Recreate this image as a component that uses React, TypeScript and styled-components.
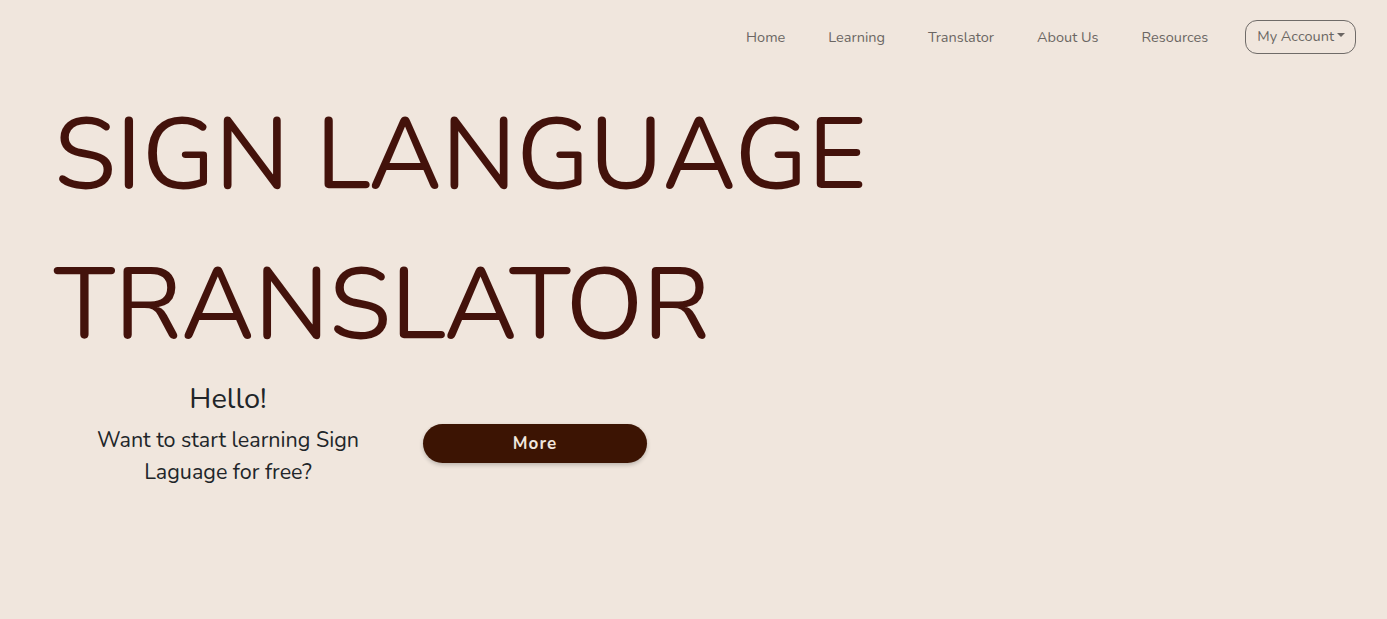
import React from "react";
import styled, { createGlobalStyle } from "styled-components";

const Global = createGlobalStyle`
  html, body {
    margin: 0;
    padding: 0;
    background: #f0e6dd;
  }
  body {
    font-family: "Nunito", "Lato", "Noto Sans", sans-serif;
    color: #212529;
  }
  * { box-sizing: border-box; }
`;

const Page = styled.div`
  min-height: 619px;
  background: #f0e6dd;
  display: flex;
  flex-direction: column;
`;

const NavBar = styled.nav`
  height: 74px;
  display: flex;
  align-items: center;
  justify-content: flex-end;
  padding: 0 31px 0 0;
`;

const NavList = styled.ul`
  display: flex;
  align-items: center;
  gap: 43px;
  list-style: none;
  margin: 0;
  padding: 0;
`;

const NavLink = styled.a`
  font-size: 14.5px;
  color: #6b6663;
  text-decoration: none;
  line-height: 22px;
  cursor: pointer;
`;

const AccountButton = styled.button`
  margin-left: -6px;
  margin-bottom: 1px;
  height: 34px;
  padding: 0 10px 2px 11px;
  border: 1px solid #6f6b68;
  border-radius: 12px;
  background: transparent;
  font-family: inherit;
  font-size: 14.5px;
  color: #6b6663;
  display: flex;
  align-items: center;
  cursor: pointer;
`;

const Caret = styled.span`
  display: inline-block;
  margin-left: 3px;
  margin-bottom: 2px;
  border-top: 4.5px solid #6b6663;
  border-left: 4px solid transparent;
  border-right: 4px solid transparent;
`;

const Hero = styled.main`
  display: flex;
  flex-direction: column;
  padding-left: 54px;
`;

const Title = styled.h1`
  margin: 6px 0 0 0;
  font-size: 100.8px;
  line-height: 150px;
  font-weight: 400;
  color: #43120b;
`;

const Intro = styled.section`
  display: flex;
  flex-direction: column;
  padding-left: 4px;
  margin-top: 1px;
`;

const Greeting = styled.h2`
  margin: 0 0 8px 0;
  width: 340px;
  text-align: center;
  font-size: 29px;
  line-height: 35px;
  font-weight: 400;
  color: #212529;
`;

const IntroRow = styled.div`
  display: flex;
  align-items: flex-start;
  gap: 25px;
`;

const Lead = styled.p`
  margin: 0;
  width: 340px;
  text-align: center;
  font-size: 21.5px;
  line-height: 32px;
  color: #212529;
`;

const MoreButton = styled.button`
  width: 224px;
  height: 39px;
  border: none;
  border-radius: 20px;
  background: #3c1403;
  color: #f0e6dd;
  font-family: inherit;
  font-size: 17px;
  font-weight: 700;
  letter-spacing: 1px;
  box-shadow: 0 2px 4px rgba(0, 0, 0, 0.22);
  cursor: pointer;
`;

const links = ["Home", "Learning", "Translator", "About Us", "Resources"];

export default function App() {
  return (
    <Page>
      <Global />
      <NavBar>
        <NavList>
          {links.map((l) => (
            <li key={l}>
              <NavLink>{l}</NavLink>
            </li>
          ))}
          <li>
            <AccountButton>
              My Account
              <Caret />
            </AccountButton>
          </li>
        </NavList>
      </NavBar>
      <Hero>
        <Title>
          SIGN LANGUAGE
          <br />
          TRANSLATOR
        </Title>
        <Intro>
          <Greeting>Hello!</Greeting>
          <IntroRow>
            <Lead>
              Want to start learning Sign
              <br />
              Laguage for free?
            </Lead>
            <MoreButton>More</MoreButton>
          </IntroRow>
        </Intro>
      </Hero>
    </Page>
  );
}
